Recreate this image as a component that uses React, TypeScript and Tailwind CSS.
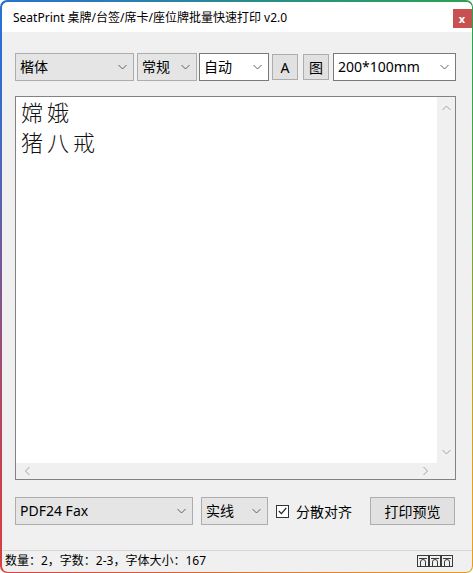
const ui = "font-['Noto_Sans','Noto_Sans_CJK_SC',sans-serif]";

function Chevron({ className = "" }: { className?: string }) {
  return (
    <svg width="9" height="6" viewBox="0 0 9 6" className={className}>
      <path d="M0.5 1l4 4 4-4" fill="none" stroke="currentColor" strokeWidth="1" />
    </svg>
  );
}

type ComboProps = {
  value: string;
  width: string;
  editable?: boolean;
};

function Combo({ value, width, editable }: ComboProps) {
  return (
    <div
      className={`${width} flex h-[28px] items-center justify-between border pl-[4px] pr-[6px] text-[14px] text-black ${
        editable ? "h-[27px] border-[#7a7a7a] bg-white" : "border-[#adadad] bg-[#e5e5e5]"
      }`}
    >
      <span className="leading-none">{value}</span>
      <Chevron className="text-[#606060]" />
    </div>
  );
}

function SmallBtn({ label }: { label: string }) {
  return (
    <div className="flex h-[26px] w-[26px] items-center justify-center border border-[#adadad] bg-[#e1e1e1] text-[14px] text-black">
      {label}
    </div>
  );
}

function GripIcon() {
  return (
    <svg width="12" height="12" viewBox="0 0 12 12" className="text-[#3a3a3a]">
      <rect x="0.5" y="0.5" width="11" height="11" fill="none" stroke="currentColor" strokeWidth="1" />
      <path d="M2 3.5h8" stroke="currentColor" strokeWidth="1" />
      <path d="M3.5 11V7a2.5 2.5 0 0 1 5 0v4" fill="none" stroke="currentColor" strokeWidth="1" />
    </svg>
  );
}

export default function App() {
  return (
    <div className={`${ui} h-[573px] w-[473px] rounded-[7px] bg-[conic-gradient(from_-45deg,#2b6ed8,#2aa54c_25%,#e9a21c_50%,#d33d45_75%,#2b6ed8)] p-[1.5px]`}>
      <div className="flex h-full flex-col overflow-hidden rounded-[6px] bg-[#f0f0f0]">
        {/* title bar */}
        <div className="flex h-[30px] shrink-0 items-start justify-between bg-white pl-[11.5px]">
          <span className="mt-[7px] text-[12px] leading-[18px] text-black">
            SeatPrint 桌牌/台签/席卡/座位牌批量快速打印 v2.0
          </span>
          <div className="mt-[7.5px] flex h-[19px] w-[19px] items-center justify-center bg-[#c75050] text-[11px] font-bold leading-none text-white">
            x
          </div>
        </div>

        {/* body */}
        <div className="flex flex-1 flex-col px-[13.5px] pt-[21.5px]">
          <div className="flex items-center">
            <Combo value="楷体" width="w-[119px]" />
            <div className="ml-[3px]">
              <Combo value="常规" width="w-[60px]" />
            </div>
            <div className="ml-[2px]">
              <Combo value="自动" width="w-[70px]" editable />
            </div>
            <div className="ml-[3px]">
              <SmallBtn label="A" />
            </div>
            <div className="ml-[5px]">
              <SmallBtn label="图" />
            </div>
            <div className="ml-[4px]">
              <Combo value="200*100mm" width="w-[123px]" editable />
            </div>
          </div>

          {/* text box */}
          <div className="mt-[15px] grid h-[384px] w-[441px] grid-cols-[1fr_18px] grid-rows-[1fr_16px] border border-[#828282] bg-white">
            <div className="pl-[5px] text-[22px] font-light leading-[30px] tracking-[4px] text-[#111]">
              <div>嫦娥</div>
              <div>猪八戒</div>
            </div>
            <div className="flex flex-col items-center justify-between bg-[#f0f0f0] py-[8px] text-[#a3a3a3]">
              <Chevron className="rotate-180" />
              <Chevron />
            </div>
            <div className="flex items-center justify-between bg-[#f0f0f0] px-[7px] text-[#a3a3a3]">
              <Chevron className="rotate-90" />
              <Chevron className="-rotate-90" />
            </div>
            <div className="bg-[#f0f0f0]" />
          </div>

          {/* bottom row */}
          <div className="mt-[17px] flex items-center">
            <Combo value="PDF24 Fax" width="w-[178px]" />
            <div className="ml-[8px]">
              <Combo value="实线" width="w-[67px]" />
            </div>
            <div className="ml-[8px] flex h-[13px] w-[13px] items-center justify-center border border-[#333] bg-white">
              <svg width="9" height="8" viewBox="0 0 9 8">
                <path d="M0.8 4l2.6 2.6L8.2 1" fill="none" stroke="#222" strokeWidth="1.2" />
              </svg>
            </div>
            <span className="ml-[7px] text-[14px] text-black">分散对齐</span>
            <div className="ml-[18px] flex h-[28px] w-[85px] items-center justify-center border border-[#adadad] bg-[#e1e1e1] text-[14px] text-black">
              打印预览
            </div>
          </div>
        </div>

        {/* status bar */}
        <div className="flex h-[22px] shrink-0 items-center justify-between border-t border-[#d7d7d7] pl-[3.5px] pr-[19px] text-[12px] text-black">
          <span>数量：2，字数：2-3，字体大小：167</span>
          <div className="flex">
            <GripIcon />
            <GripIcon />
            <GripIcon />
          </div>
        </div>
      </div>
    </div>
  );
}
